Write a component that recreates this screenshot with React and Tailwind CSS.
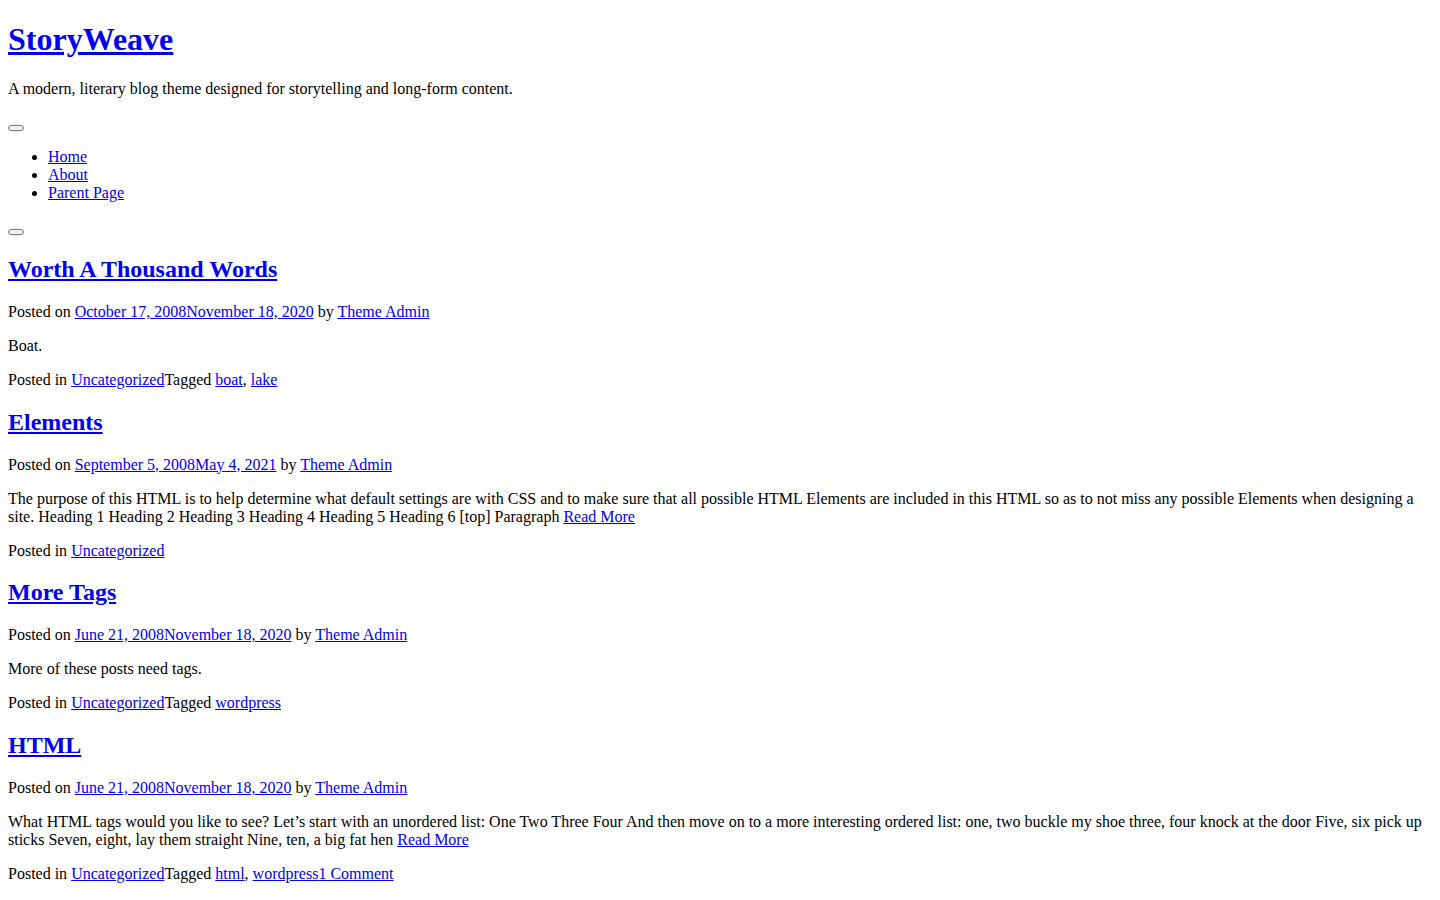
import React from "react";

const linkCls = "text-[#0000ee] underline";

const A = ({ children }) => (
  <a href="#" className={linkCls}>
    {children}
  </a>
);

// empty toggle button, drawn the way an unstyled browser button looks
const Toggle = () => (
  <div>
    <button
      type="button"
      className="inline-block w-[16px] h-[6px] border border-[#767676] bg-[#efefef] rounded-[3px] align-[-2px]"
    ></button>
  </div>
);

const posts = [
  {
    title: "Worth A Thousand Words",
    date: "October 17, 2008November 18, 2020",
    summary: "Boat.",
    tags: ["boat", "lake"],
  },
  {
    title: "Elements",
    date: "September 5, 2008May 4, 2021",
    summary:
      "The purpose of this HTML is to help determine what default settings are with CSS and to make sure that all possible HTML Elements are included in this HTML so as to not miss any possible Elements when designing a site. Heading 1 Heading 2 Heading 3 Heading 4 Heading 5 Heading 6 [top] Paragraph",
    more: true,
    tags: [],
  },
  {
    title: "More Tags",
    date: "June 21, 2008November 18, 2020",
    summary: "More of these posts need tags.",
    tags: ["wordpress"],
  },
  {
    title: "HTML",
    date: "June 21, 2008November 18, 2020",
    summary:
      "What HTML tags would you like to see? Let\u2019s start with an unordered list: One Two Three Four And then move on to a more interesting ordered list: one, two buckle my shoe three, four knock at the door Five, six pick up sticks Seven, eight, lay them straight Nine, ten, a big fat hen",
    more: true,
    tags: ["html", "wordpress"],
    comments: "1 Comment",
  },
];

const Post = ({ post }) => (
  <article>
    <header>
      <h2 className="text-[24px] font-bold my-[19.92px]">
        <A>{post.title}</A>
      </h2>
      <div>
        Posted on <A>{post.date}</A> by <A>Theme Admin</A>
      </div>
    </header>
    <div>
      <p className="my-4">
        {post.summary}
        {post.more && (
          <>
            {" "}
            <A>Read More</A>
          </>
        )}
      </p>
    </div>
    <footer>
      Posted in <A>Uncategorized</A>
      {post.tags.length > 0 && (
        <>
          Tagged{" "}
          {post.tags.map((t, i) => (
            <React.Fragment key={t}>
              {i > 0 && ", "}
              <A>{t}</A>
            </React.Fragment>
          ))}
        </>
      )}
      {post.comments && <A>{post.comments}</A>}
    </footer>
  </article>
);

export default function App() {
  return (
    <div className="bg-white min-h-screen flow-root">
      <div className="m-2 text-black text-[16px] leading-[normal] font-['Liberation_Serif','Times_New_Roman',serif]">
        <header>
          <h1 className="text-[32px] font-bold my-[21.44px]">
            <A>StoryWeave</A>
          </h1>
          <p className="my-4">
            A modern, literary blog theme designed for storytelling and long-form content.
          </p>
          <nav>
            <Toggle />
            <ul className="my-4 pl-10 list-disc">
              <li>
                <A>Home</A>
              </li>
              <li>
                <A>About</A>
              </li>
              <li>
                <A>Parent Page</A>
              </li>
            </ul>
          </nav>
          <Toggle />
        </header>
        <main>
          {posts.map((p) => (
            <Post key={p.title} post={p} />
          ))}
        </main>
      </div>
    </div>
  );
}
